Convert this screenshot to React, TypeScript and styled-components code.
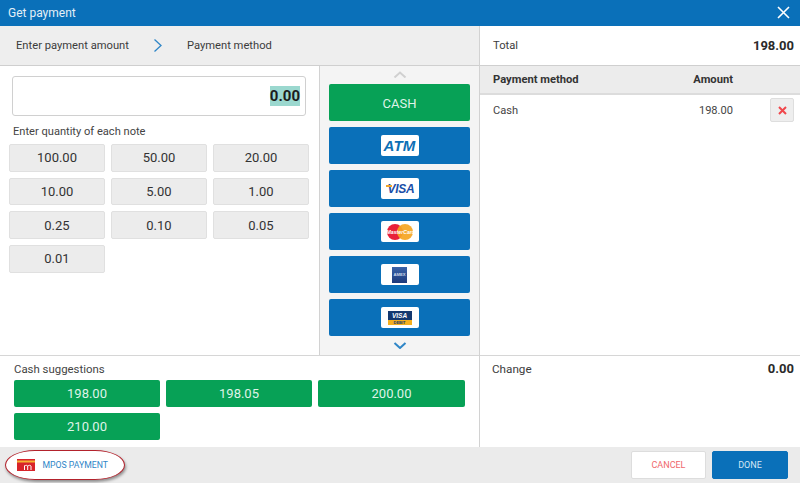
import React from "react";
import styled, { createGlobalStyle } from "styled-components";

const Global = createGlobalStyle`
  html, body { margin: 0; padding: 0; background: #fff; }
  * { box-sizing: border-box; }
  body { font-family: Roboto, "Liberation Sans", sans-serif; color: #333; overflow: hidden; }
`;

const Page = styled.div`
  width: 800px; height: 483px; display: flex; flex-direction: column; background: #fff;
`;
const Header = styled.header`
  height: 26px; flex: none; background: #0a70b9; color: #e4eff7; font-size: 12px;
  display: flex; align-items: center; justify-content: space-between;
  padding: 0 10px 1px 8px;
`;
const Close = styled.svg`
  width: 13px; height: 13px; stroke: #fff; stroke-width: 1.6; fill: none; display: block;
`;
const Main = styled.div`
  flex: 1; min-height: 0; display: grid; grid-template-columns: 480px 320px;
`;
const Left = styled.div`
  display: flex; flex-direction: column; border-right: 1px solid #d2d2d2; min-height: 0;
`;
const Steps = styled.div`
  height: 40px; flex: none; background: #eeeeee; border-bottom: 1px solid #cfcfcf;
  display: flex; align-items: center; padding: 0 0 0 16px; font-size: 11.2px; color: #3c3c3c;
`;
const Chevron = styled.svg`
  width: 10px; height: 15px; margin: 0 24px 0 24px; fill: none; stroke: #2f86c7; stroke-width: 1.3; display: block;
`;
const Middle = styled.div`
  height: 290px; flex: none; display: grid; grid-template-columns: 319px 160px;
  border-bottom: 1px solid #d6d6d6;
`;
const Entry = styled.div`
  padding: 10px 10px 0 9px; display: flex; flex-direction: column;
`;
const AmountBox = styled.div`
  height: 40px; margin: 0 3px 0 3px; border: 1px solid #d0d0d0; border-radius: 3px; background: #fff;
  display: flex; align-items: center; justify-content: flex-end; padding-right: 5px;
`;
const Selected = styled.span`
  background: #9bd8cf; color: #1c1c1c; font-weight: 700; font-size: 15px; line-height: 20px; padding: 0;
`;
const Caption = styled.div`
  font-size: 11.1px; color: #444; margin: 9px 0 0 4px; line-height: 14px; height: 14px;
`;
const NoteGrid = styled.div`
  margin-top: 5px; display: grid; grid-template-columns: repeat(3, 96px); grid-auto-rows: 27.67px;
  column-gap: 6px; row-gap: 6px;
`;
const Note = styled.div`
  background: #ececec; border: 1px solid #e0e0e0; border-radius: 2px; color: #333;
  font-size: 13px; display: flex; align-items: center; justify-content: center;
`;
const Methods = styled.div`
  background: #f4f4f4; border-left: 1px solid #d2d2d2;
  display: flex; flex-direction: column; align-items: center; padding-top: 5px;
`;
const Arrow = styled.svg<{ $c: string }>`
  width: 14px; height: 7px; fill: none; stroke: ${(p) => p.$c}; stroke-width: 2; display: block; flex: none;
`;
const MethodList = styled.div`
  width: 141px; margin: 6px 0 6px 0; display: flex; flex-direction: column; gap: 6px;
`;
const Method = styled.div<{ $cash?: boolean }>`
  height: 37px; border-radius: 2px; background: ${(p) => (p.$cash ? "#07a156" : "#0a70b9")};
  color: #dff3e8; font-size: 13px; padding-top: ${(p) => (p.$cash ? 1 : 0)}px;
  display: flex; align-items: center; justify-content: center;
`;
const Chip = styled.div`
  width: 38px; height: 21px; background: #fff; border-radius: 2px; overflow: hidden;
  display: flex; align-items: center; justify-content: center; position: relative;
`;
const AtmMark = styled.span`
  font: italic 900 15px "Liberation Sans", sans-serif; color: #0d6fb5; letter-spacing: 0.2px;
`;
const VisaMark = styled.span`
  font: italic 700 12px "Liberation Sans", sans-serif; color: #1a4fa8; letter-spacing: -0.3px; margin-left: 3px;
  &::before { content: ""; position: absolute; left: 5px; top: 7px; width: 6px; height: 2px; background: #f0a428; }
`;
const McMark = styled.div`
  width: 26px; height: 16px; position: relative;
  &::before { content: ""; position: absolute; left: 0; top: 0; width: 16px; height: 16px; border-radius: 50%; background: #e8203a; }
  &::after { content: ""; position: absolute; right: 0; top: 0; width: 16px; height: 16px; border-radius: 50%; background: #f5a623; opacity: .93; }
`;
const McText = styled.span`
  position: absolute; inset: 0; z-index: 1; font: italic 700 5.2px/16px "Liberation Sans", sans-serif; color: #fff; text-align: center; white-space: nowrap;
`;
const AmexMark = styled.div`
  width: 15px; height: 16px; background: linear-gradient(#3b63a8, #1d3a7c); color: #cfd9ea;
  font: 700 4.2px/16px "Liberation Sans", sans-serif; text-align: center;
`;
const DebitMark = styled.div`
  width: 24px; height: 14px; background: #14386f; position: relative; color: #fff;
  font: italic 700 6.5px/9px "Liberation Sans", sans-serif; text-align: center;
`;
const DebitStrip = styled.span`
  position: absolute; left: 0; right: 0; bottom: 0; height: 5px; background: #f6b01e; color: #14386f;
  font: 700 4px/5px "Liberation Sans", sans-serif; text-align: center;
`;
const Suggest = styled.div`
  flex: 1; padding: 6px 14px 0 14px; min-height: 0;
`;
const SuggestTitle = styled.div`
  font-size: 11.4px; color: #444; line-height: 14px;
`;
const SuggestGrid = styled.div`
  margin-top: 4px; display: grid; grid-template-columns: 146px 146px 147px; grid-auto-rows: 27px;
  column-gap: 6px; row-gap: 6px;
`;
const Suggestion = styled.div`
  background: #07a156; border-radius: 2px; color: #dff3e8; font-size: 13px;
  display: flex; align-items: center; justify-content: center;
`;
const Right = styled.div`
  display: flex; flex-direction: column; min-height: 0;
`;
const TotalRow = styled.div`
  height: 40px; flex: none; border-bottom: 1px solid #cfcfcf; display: flex; align-items: center;
  justify-content: space-between; padding: 0 6px 0 13px; font-size: 11.2px; color: #3c3c3c;
`;
const Strong = styled.strong`
  font-size: 13px; font-weight: 700; color: #2a2a2a;
`;
const TableHead = styled.div`
  height: 29px; flex: none; background: #ececec; border-bottom: 2px solid #dcdcdc;
  display: grid; grid-template-columns: 187px 53px; align-items: center; padding-left: 13px;
  font-size: 11.2px; font-weight: 700; color: #333;
`;
const Amount = styled.span`
  text-align: right;
`;
const TableRow = styled.div`
  height: 30px; flex: none; display: grid; grid-template-columns: 187px 53px 61px; align-items: center;
  padding-left: 13px; font-size: 11.1px; color: #444;
`;
const Remove = styled.div`
  width: 24px; height: 24px; justify-self: end; background: #eeeeee; border: 1px solid #dedede; border-radius: 2px;
  display: flex; align-items: center; justify-content: center;
`;
const RemoveIcon = styled.svg`
  width: 9px; height: 9px; stroke: #f0474c; stroke-width: 2; fill: none; display: block;
`;
const Spacer = styled.div`
  height: 231px; flex: none; border-bottom: 1px solid #d6d6d6;
`;
const ChangeRow = styled.div`
  display: flex; justify-content: space-between; align-items: center; padding: 5px 6px 0 12px;
  font-size: 11.7px; color: #3c3c3c; line-height: 16px;
`;
const Footer = styled.footer`
  height: 36px; flex: none; background: #ebebeb; display: flex; align-items: center;
  padding: 0 12px 0 5px;
`;
const MposButton = styled.div`
  width: 120px; height: 30px; border: 1.5px solid #b3222c; border-radius: 30px / 15px; background: #fff;
  box-shadow: 1px 2px 3px rgba(0,0,0,.4); display: flex; align-items: center; padding-left: 10.5px; gap: 8px;
  font-size: 8.7px; color: #2f86c7; white-space: nowrap;
`;
const CardIcon = styled.svg`
  width: 18px; height: 12px; display: block; flex: none;
`;
const FooterActions = styled.div`
  margin-left: auto; display: flex; gap: 6px;
`;
const FootButton = styled.div<{ $primary?: boolean }>`
  width: ${(p) => (p.$primary ? 76 : 75)}px; height: 28px; border-radius: 2px; font-size: 9px;
  display: flex; align-items: center; justify-content: center;
  background: ${(p) => (p.$primary ? "#0a70b9" : "#fff")};
  color: ${(p) => (p.$primary ? "#d5e7f4" : "#f0686c")};
  border: 1px solid ${(p) => (p.$primary ? "#0a70b9" : "#dddddd")};
`;

const notes = ["100.00","50.00","20.00","10.00","5.00","1.00","0.25","0.10","0.05","0.01"];
const cash = ["198.00","198.05","200.00","210.00"];

export default function App() {
  return (
    <Page>
      <Global />
      <Header>
        <span>Get payment</span>
        <Close viewBox="0 0 13 13"><path d="M1 1l11 11M12 1L1 12" /></Close>
      </Header>
      <Main>
        <Left>
          <Steps>
            <span>Enter payment amount</span>
            <Chevron viewBox="0 0 10 15"><path d="M1.5 1.5L8 7.5l-6.5 6" /></Chevron>
            <span>Payment method</span>
          </Steps>
          <Middle>
            <Entry>
              <AmountBox><Selected>0.00</Selected></AmountBox>
              <Caption>Enter quantity of each note</Caption>
              <NoteGrid>
                {notes.map((n) => <Note key={n}>{n}</Note>)}
              </NoteGrid>
            </Entry>
            <Methods>
              <Arrow $c="#d0d0d0" viewBox="0 0 14 7"><path d="M1.5 6.5L7 1.5l5.5 5" /></Arrow>
              <MethodList>
                <Method $cash>CASH</Method>
                <Method><Chip><AtmMark>ATM</AtmMark></Chip></Method>
                <Method><Chip><VisaMark>VISA</VisaMark></Chip></Method>
                <Method><Chip><McMark><McText>MasterCard</McText></McMark></Chip></Method>
                <Method><Chip><AmexMark>AMEX</AmexMark></Chip></Method>
                <Method><Chip><DebitMark>VISA<DebitStrip>DEBIT</DebitStrip></DebitMark></Chip></Method>
              </MethodList>
              <Arrow $c="#2f86c7" viewBox="0 0 14 7"><path d="M1.5 1L7 6l5.5-5" /></Arrow>
            </Methods>
          </Middle>
          <Suggest>
            <SuggestTitle>Cash suggestions</SuggestTitle>
            <SuggestGrid>
              {cash.map((c) => <Suggestion key={c}>{c}</Suggestion>)}
            </SuggestGrid>
          </Suggest>
        </Left>
        <Right>
          <TotalRow><span>Total</span><Strong>198.00</Strong></TotalRow>
          <TableHead><span>Payment method</span><Amount>Amount</Amount></TableHead>
          <TableRow>
            <span>Cash</span><Amount>198.00</Amount>
            <Remove><RemoveIcon viewBox="0 0 9 9"><path d="M1 1l7 7M8 1L1 8" /></RemoveIcon></Remove>
          </TableRow>
          <Spacer />
          <ChangeRow><span>Change</span><Strong>0.00</Strong></ChangeRow>
        </Right>
      </Main>
      <Footer>
        <MposButton>
          <CardIcon viewBox="0 0 18 12">
            <rect width="18" height="12" fill="#d8232a" />
            <rect y="1.5" width="18" height="2" fill="#f5b335" />
            <path d="M7.5 11V6.5M7.5 7c1.2-.9 2.6-.9 3.2 0v4M10.7 7c1.2-.9 2.7-.9 3.3 0v4" stroke="#fff" strokeWidth="1" fill="none" />
          </CardIcon>
          <span>MPOS PAYMENT</span>
        </MposButton>
        <FooterActions>
          <FootButton>CANCEL</FootButton>
          <FootButton $primary>DONE</FootButton>
        </FooterActions>
      </Footer>
    </Page>
  );
}
